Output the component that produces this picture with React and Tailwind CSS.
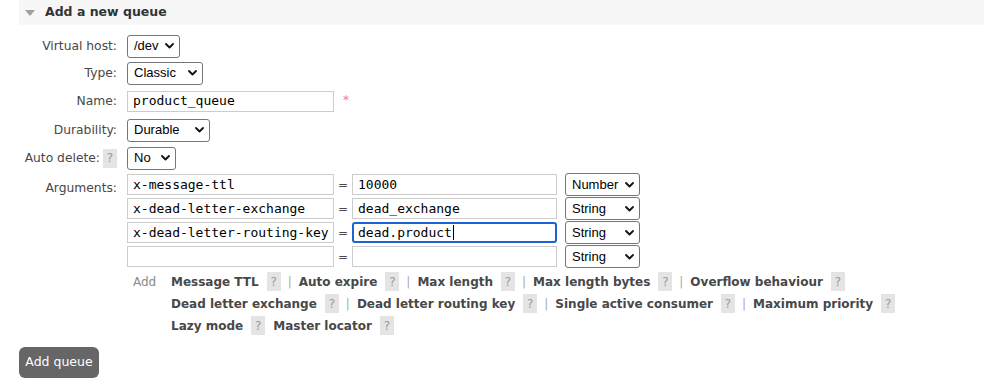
const sans = "font-['DejaVu_Sans',Verdana,sans-serif]";
const mono = "font-['DejaVu_Sans_Mono',Menlo,monospace]";
const sys = "font-['Liberation_Sans',Arial,sans-serif]";

function Chevron() {
  return (
    <svg width="9" height="6" viewBox="0 0 9 6" className="shrink-0">
      <path d="M1 1l3.5 3.5L8 1" fill="none" stroke="#111" strokeWidth="1.8" strokeLinecap="round" strokeLinejoin="round" />
    </svg>
  );
}

function Select({ value, width }) {
  return (
    <div
      className={`flex items-center justify-between h-[23px] pl-[6px] pr-[5px] border border-[#767676] rounded-[3px] bg-white text-[13px] text-black ${sys}`}
      style={{ width }}
    >
      <span>{value}</span>
      <Chevron />
    </div>
  );
}

function Field({ value, focused, className = "" }) {
  return (
    <div
      className={`flex items-center h-[21px] bg-white text-[13px] text-black ${mono} ${
        focused ? "border-2 border-[#1d63d6] rounded-[3px] pl-[4px]" : "border border-[#cccccc] pl-[5px]"
      } ${className}`}
    >
      <span>{value}</span>
      {focused && <span className="w-px h-[15px] bg-black ml-px" />}
    </div>
  );
}

function Help() {
  return (
    <span className="inline-flex items-center justify-center w-[14px] h-[19px] bg-[#e4e4e4] text-[#9a9a9a] font-normal text-[12px]">?</span>
  );
}

function Row({ label, help, className = "", children }) {
  return (
    <div className={`flex items-center ${className}`}>
      <div className="w-[98px] flex justify-end items-center gap-[3px]">
        <span>{label}</span>
        {help && <Help />}
      </div>
      <div className="ml-[10px] flex items-center">{children}</div>
    </div>
  );
}

const args = [
  ["x-message-ttl", "10000", "Number"],
  ["x-dead-letter-exchange", "dead_exchange", "String"],
  ["x-dead-letter-routing-key", "dead.product", "String", true],
  ["", "", "String"],
];

const links = [
  ["Message TTL", "Auto expire", "Max length", "Max length bytes", "Overflow behaviour"],
  ["Dead letter exchange", "Dead letter routing key", "Single active consumer", "Maximum priority"],
  ["Lazy mode", "Master locator"],
];

export default function App() {
  return (
    <div className={`w-[984px] h-[388px] bg-white text-[#484848] text-[12.3px] ${sans} pl-[19px]`}>
      <div className="h-[25px] bg-[#f7f7f7] flex items-center">
        <svg width="10" height="6" viewBox="0 0 10 6" className="ml-[6px]">
          <path d="M0 0h10L5 6z" fill="#a0a0a0" />
        </svg>
        <span className="ml-[10px] font-bold text-[12.5px] text-[#333]">Add a new queue</span>
      </div>

      <div className="pt-[9px]">
        <Row label="Virtual host:" className="h-[24px]">
          <Select value="/dev" width={53} />
        </Row>
        <Row label="Type:" className="h-[24px] mt-[3px]">
          <Select value="Classic" width={76} />
        </Row>
        <Row label="Name:" className="h-[24px] mt-[4px]">
          <Field value="product_queue" className="w-[207px]" />
          <span className="ml-[9px] text-[#f47c7c] text-[12px] -mt-[2px]">*</span>
        </Row>
        <Row label="Durability:" className="h-[24px] mt-[5px]">
          <Select value="Durable" width={83} />
        </Row>
        <Row label="Auto delete:" help className="h-[24px] mt-[4px]">
          <Select value="No" width={49} />
        </Row>

        <div className="flex mt-[4px]">
          <div className="w-[98px] text-right pt-[5px]">Arguments:</div>
          <div className="ml-[10px] flex flex-col gap-[3px]">
            {args.map(([k, v, t, f], i) => (
              <div key={i} className="flex items-center h-[21px]">
                <Field value={k} className="w-[207px]" />
                <span className="w-[18px] text-center text-[12px]">=</span>
                <Field value={v} focused={f} className="w-[205px]" />
                <div className="ml-[8px]">
                  <Select value={t} width={75} />
                </div>
              </div>
            ))}
          </div>
        </div>

        <div className="flex mt-[5px] text-[12px]">
          <div className="ml-[114px] w-[38px] text-[#8a8a8a] font-normal pt-[1px]">Add</div>
          <div className="flex flex-col gap-[3px] font-bold">
            {links.map((line, i) => (
              <div key={i} className="flex items-center h-[19px]">
                {line.map((l, j) => (
                  <span key={l} className="flex items-center">
                    <span>{l}</span>
                    <span className="ml-[8px]">
                      <Help />
                    </span>
                    {j < line.length - 1 &&
                      (i < 2 ? (
                        <span className="font-normal text-[#aaa] mx-[7px]">|</span>
                      ) : (
                        <span className="w-[8px]" />
                      ))}
                  </span>
                ))}
              </div>
            ))}
          </div>
        </div>

        <button className="mt-[12px] w-[80px] h-[31px] bg-[#666666] rounded-[6px] text-white text-[12.5px]">
          Add queue
        </button>
      </div>
    </div>
  );
}
